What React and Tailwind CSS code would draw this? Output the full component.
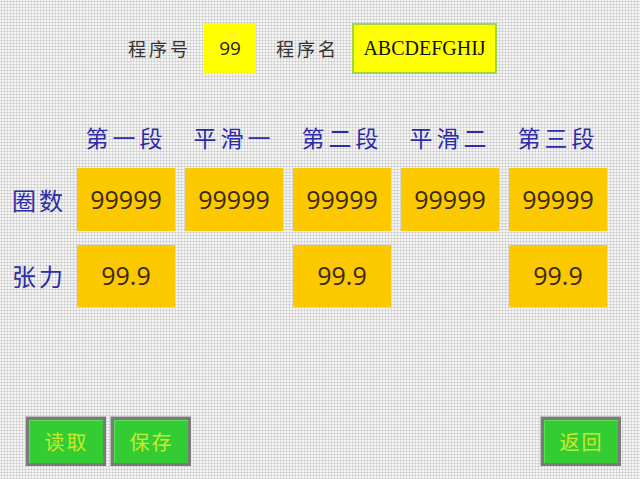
const cjk = "font-['Noto_Sans_CJK_SC','Noto_Sans',sans-serif]";
const num = "font-['Open_Sans','Noto_Sans',sans-serif]";

function Btn({ children }) {
  return (
    <div className="w-[81px] h-[50px] bg-[#7a7a7a] p-[3px] border-t border-l border-[#bdbdbd]">
      <div className={`w-full h-full bg-[#33cc33] border-t border-l border-[#55e055] flex items-center justify-center text-[20px] text-[#c8ea30] tracking-[2px] ${cjk}`}>
        {children}
      </div>
    </div>
  );
}

export default function App() {
  const cols = ["第一段", "平滑一", "第二段", "平滑二", "第三段"];
  const turns = ["99999", "99999", "99999", "99999", "99999"];
  const tension = ["99.9", null, "99.9", null, "99.9"];

  return (
    <div className="w-[640px] h-[479px] overflow-hidden flex flex-col bg-[#f4f4f4] bg-[radial-gradient(#c6c6c6_0.9px,transparent_1.1px)] bg-[size:3px_3px]">
      {/* program header */}
      <div className="mt-[22px] h-[52px] flex items-center pl-[128px]">
        <span className={`w-[76px] text-[18px] tracking-[3px] text-[#333] ${cjk}`}>程序号</span>
        <div className={`w-[52px] h-[51px] bg-[#ffff00] flex items-center justify-center text-[19px] text-[#222] ${num}`}>
          99
        </div>
        <span className={`ml-[20px] w-[76px] text-[18px] tracking-[3px] text-[#333] ${cjk}`}>程序名</span>
        <div className="w-[145px] h-[51px] bg-[#ffff00] border-2 border-[#9ad848] flex items-center justify-center text-[20px] font-['Liberation_Serif',serif] text-[#111]">
          ABCDEFGHIJ
        </div>
      </div>

      {/* table */}
      <div className="mt-[48px] grid grid-cols-[67px_98px_98px_98px_98px_98px] gap-x-[10px]">
        <div />
        {cols.map((c, i) => (
          <div key={i} className={`h-[30px] flex items-center justify-center text-[23px] tracking-[4px] text-[#2c2ca8] leading-none whitespace-nowrap ${cjk}`}>
            {c}
          </div>
        ))}

        <div className={`mt-[16px] h-[63px] pl-[12px] flex items-center text-[24px] tracking-[3px] whitespace-nowrap text-[#2c2ca8] ${cjk}`}>圈数</div>
        {turns.map((v, i) => (
          <div key={i} className={`mt-[16px] h-[63px] bg-[#fcc800] flex items-center justify-center text-[25px] text-[#3a2a0c] ${num}`}>
            {v}
          </div>
        ))}

        <div className={`mt-[14px] h-[62px] pl-[12px] flex items-center text-[24px] tracking-[3px] whitespace-nowrap text-[#2c2ca8] ${cjk}`}>张力</div>
        {tension.map((v, i) =>
          v ? (
            <div key={i} className={`mt-[14px] h-[62px] bg-[#fcc800] flex items-center justify-center text-[25px] text-[#3a2a0c] ${num}`}>
              {v}
            </div>
          ) : (
            <div key={i} />
          )
        )}
      </div>

      {/* bottom buttons */}
      <div className="mt-auto mb-[13px] flex items-center px-[19px]">
        <div className="ml-[6px] flex gap-[4px]">
          <Btn>读取</Btn>
          <Btn>保存</Btn>
        </div>
        <div className="ml-auto">
          <Btn>返回</Btn>
        </div>
      </div>
    </div>
  );
}
